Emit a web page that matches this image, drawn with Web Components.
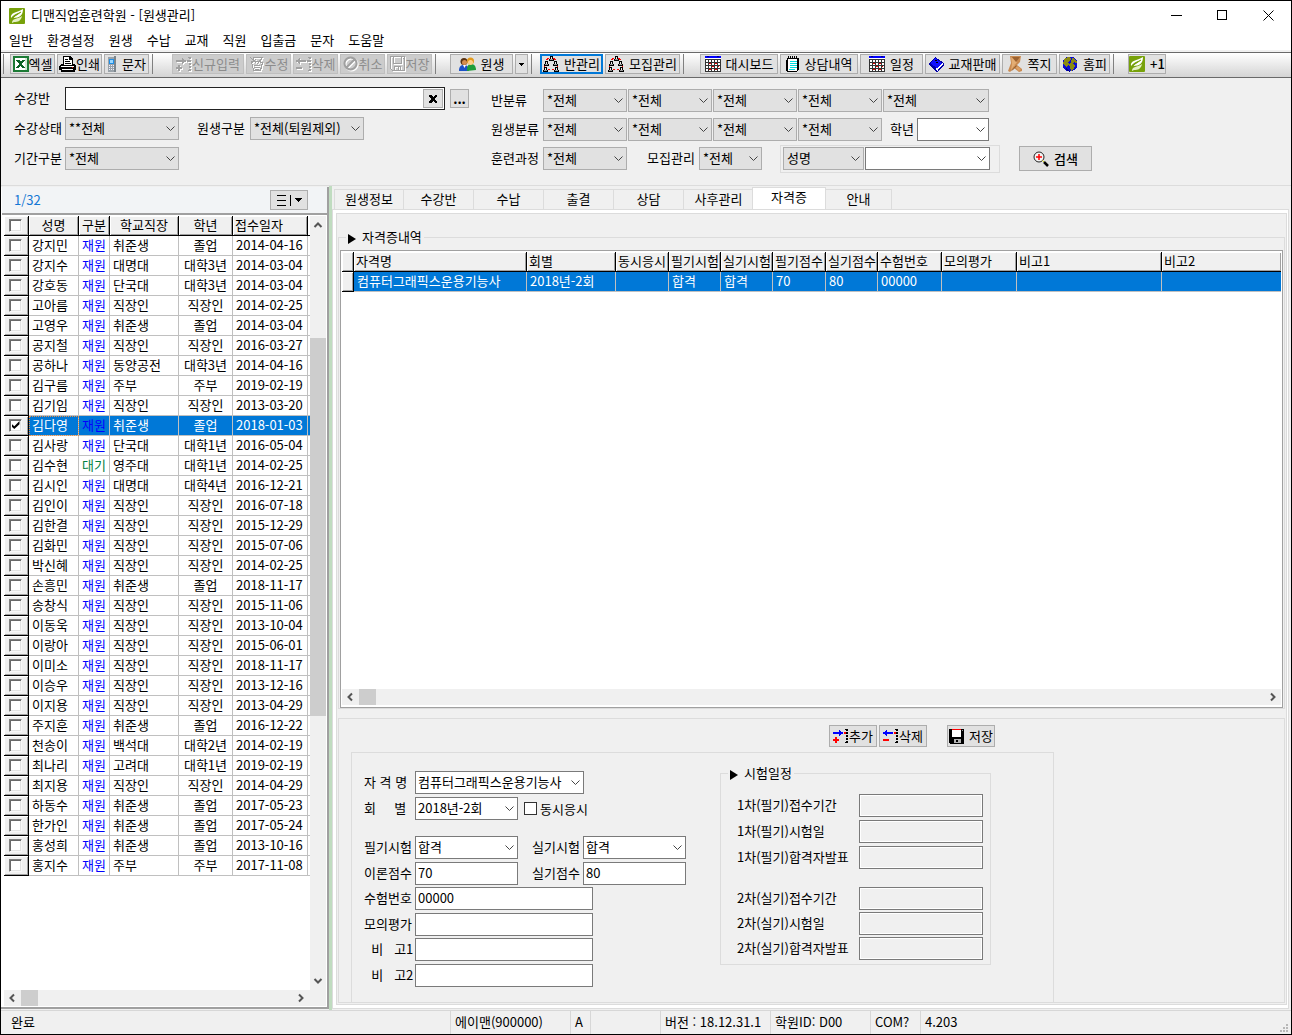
<!DOCTYPE html>
<html lang="ko">
<head>
<meta charset="utf-8">
<title>디맨직업훈련학원 - [원생관리]</title>
<style>
html, body { margin: 0; height: 100%; }
body { font: 13px/18px "Noto Sans CJK KR", "Malgun Gothic", sans-serif; color: #000; background: #f0f0f0; }
</style>
</head>
<body>
<academy-app></academy-app>
<script>
const BASE = `
  :host { display: block; box-sizing: border-box; }
  *, *::before { box-sizing: border-box; }
  button, input, select { font: inherit; color: inherit; margin: 0; border-radius: 0; outline: 0; }
  button { background: #e1e1e1; border: 1px solid #adadad; padding: 0; display: flex; align-items: center; justify-content: center; white-space: nowrap; }
  table { border-collapse: separate; border-spacing: 0; table-layout: fixed; }
  th { font-weight: normal; }
`;
function define(name, css, html) {
  customElements.define(name, class extends HTMLElement {
    connectedCallback() {
      if (this.shadowRoot) return;
      const root = this.attachShadow({ mode: 'open' });
      root.innerHTML = `<style>${BASE}${css}</style>` + (typeof html === 'function' ? html(this) : html);
    }
  });
}

/* ---------- icons ---------- */
const moveArrow = (dir, a, b, k) => {
  const arrow = dir === 'in'
    ? '<path d="M0 3h6v-2h1v1h1v1h2v2h-2v1h-1v1h-1v-2h-6z"/>'
    : '<path d="M10 3h-6v-2h-1v1h-1v1h-2v2h2v1h1v1h1v-2h6z"/>';
  const sign = dir === 'in' ? '<path d="M2 8h2v2h2v2h-2v2h-2v-2h-2v-2h2z"/>' : '<path d="M0 10h6v2h-6z"/>';
  return `<g fill="${a}">${arrow}</g><g fill="${b}">${sign}<path d="M11 3h2v2h-2z"/></g>` +
    `<path fill="${k}" d="M12 0h3v1h-3zM13 1h2v1h-2zM13 3h2v2h-2zM13 6h2v2h-2zM13 9h2v2h-2zM13 12h2v1h-2zM12 13h3v1h-3z"/>`;
};
const embossed = (shape) => `<g transform="translate(1 1)" fill="#fff" stroke="#fff">${shape}</g><g fill="#a0a0a0" stroke="#a0a0a0">${shape}</g>`;
const embossMove = (dir) => `<g transform="translate(1 1)">${moveArrow(dir, '#fff', '#fff', '#fff')}</g>${moveArrow(dir, '#a0a0a0', '#a0a0a0', '#a0a0a0')}`;
const person = (x, y) => `<g transform="translate(${x} ${y})"><path fill="#000" d="M1 0h3v3h1v2h-5v-2h1z"/><path fill="#e8e8e8" d="M2 1h1v2h-1z"/><path fill="#9a9a9a" d="M1 3h3v1h-3z"/></g>`;
const calendar = '<path fill="#fff" d="M0 2h16v14h-16z"/><path fill="#00f" d="M0 0h16v2h-16z"/><path fill="#000080" d="M2 0h2v1h-2zM12 0h2v1h-2z"/><path fill="#333" d="M0 3h1v13h-1zM3 3h1v13h-1zM6 3h1v13h-1zM9 3h1v13h-1zM12 3h1v13h-1zM15 3h1v13h-1zM0 3h16v1h-16zM0 6h16v1h-16zM0 9h16v1h-16zM0 12h16v1h-16zM0 15h16v1h-16z"/><path fill="#e00" d="M4 7h2v1h-2zM10 7h2v1h-2zM7 10h2v1h-2zM13 10h1v1h-1zM4 13h2v1h-2zM10 13h2v1h-2z"/>';
const ICONS = {
  leaf: [16, 16, '<rect width="16" height="16" rx="1" fill="#77a10a"/><path fill="#fff" d="M2 10C1 4 8 5 14 1c0 6-3 9-10 9 4-3 6-4 8-6-4 1-8 3-10 6z"/><path fill="#e4efc4" d="M3 14c1-4 6-3 10-6-1 5-4 6-8 6l-2 1z"/><path stroke="#77a10a" fill="none" d="M3 11c3-4 6-5 9-7"/>', 1],
  excel: [16, 16, '<path fill="#1c7a35" d="M0 0h16v16h-16z"/><path fill="#fff" d="M2 2h12v12h-12z"/><path fill="#cfe5d3" d="M12 2h2v12h-2z"/><path fill="#0b6125" d="M3 4h3l2 2 1-2h3l-3 4 3 4h-3l-2-2-1 2h-3l3-4z"/>'],
  printer: [17, 16, '<path fill="#000" d="M4 0h7l3 3v5h2l1 2v4h-1v2h-14v-2h-2v-4l2-2h2z"/><path fill="#fff" d="M5 1h5v3h3v5h-8zM2 10h13v1h-13zM3 13h11v1h-11z"/><path fill="#000" d="M6 3h3v1h-3zM6 5h5v1h-5zM6 7h6v1h-6z"/><path fill="#d00" d="M13 11h1v1h-1z"/>'],
  phone: [10, 16, '<g transform="translate(-3 0)"><path fill="#9aa3aa" d="M4 1h8v15h-8z"/><path fill="#7b858c" d="M10 0h2v16h-2z"/><path fill="#1f8fe8" d="M5 3h5v5h-5z"/><path fill="#9bd8ff" d="M6 4h3v3h-3z"/><path fill="#eef" d="M5 9h1v1h-1zM7 9h1v1h-1zM9 9h1v1h-1zM5 11h1v1h-1zM7 11h1v1h-1zM9 11h1v1h-1zM5 13h1v1h-1zM7 13h1v1h-1zM9 13h1v1h-1z"/></g>'],
  addOff: [16, 15, embossMove('in')],
  delOff: [16, 15, embossMove('out')],
  editOff: [16, 16, embossed('<path fill="none" d="M4.5 3.5v-2h9l-2 3M2.5 5.5h7l4 1-2 8h-7zM1 1l6 6M7 3l-5 5M5 9h6M5 11h6M6 13h4M8 8l5-6"/>')],
  cancelOff: [16, 16, embossed('<path fill="none" stroke-width="2" d="M7.500 1.500a6 6 0 1 0 .1 0zM3.500 11.500l8-8"/>'), 1],
  saveOff: [16, 16, embossed('<path fill="none" d="M.5.5h14v14h-12l-2-2zM3.500.5v7h8v-7M4.500 14v-4h6v4M8.500 11v3M13.500 2v1"/>')],
  people: [17, 14, '<path fill="#1b50c8" d="M0 14c0-5 2-6 5-6s5 2 5 6z"/><path fill="#1f9d3a" d="M8 14c0-5 1-7 4-7s5 2 5 6z"/><circle cx="5" cy="4.500" r="3.500" fill="#5a3312"/><circle cx="5.500" cy="5.500" r="2.500" fill="#d58d4e"/><circle cx="11.500" cy="4" r="3.500" fill="#e39a1c"/><circle cx="11.500" cy="5.500" r="2.500" fill="#ffd08c"/><path fill="#fff" d="M4 8l1.500 3 1.500-3z"/>', 1],
  team: [16, 16, '<path fill="#f00" d="M4 2h2v1h-2zM3 3h2v1h-2zM10 2h2v1h-2zM11 3h2v1h-2zM1 8h1v3h-1zM14 8h1v3h-1zM5 13h2v1h-2zM9 13h2v1h-2z"/>' + person(6, 0) + person(1, 5) + person(10, 5) + person(0, 11) + person(11, 11)],
  calendar: [16, 16, calendar],
  memo: [14, 16, '<path fill="#000" d="M1 2h1v-2h1v2h1v-2h1v2h1v-2h1v2h1v-2h1v2h1v-2h1v2h2v12h-1v1h-1v1h-10v-1h-1v-11h1z"/><path fill="#fff" d="M2 3h9v12h-9z"/><path fill="#0dd" d="M4 5h7v1h-7zM4 7h7v1h-7zM4 9h7v1h-7zM4 11h7v1h-7zM3 13h6v1h-6z"/>'],
  book: [15, 15, '<path fill="#0000a8" d="M0 6l6-6 9 6v2l-7 7-8-7z"/><path fill="#1010ff" d="M1 6l5-5 7 5-5 5z"/><path fill="#fff" d="M8 11l5-5 1 1-6 6zM6 12l1-1 2 2-1 1z"/><path fill="#000" d="M6 3h2v1h-2zM7 5h2v1h-2z"/>'],
  note: [15, 16, '<path fill="#c98a50" d="M2 0h11l-1 6-3 3 5 4v2l-3 1-5-4-4 4-2-1 3-8z"/><path fill="#e3ad74" d="M3 1l6 5-6 8 1-6z"/><path fill="#dca066" d="M6 8l7 5-2 2-5-5z"/><path fill="#9b6230" d="M12 1l-4 5-4-5zM8 9l-5 6 2-1 4-4z"/>', 1],
  globe: [16, 16, '<circle cx="8" cy="8" r="7.500" fill="#0b0bd0"/><path fill="#8a8a12" d="M3 2l4-1 2 2-1 2-2 1 1 2-2 3-2-1-2-3zM10 2l3 1 2 3-1 1-2-1-1 2 2 2-2 4-2 1-1-4-1-3 2-2z"/><path fill="#000080" d="M4 12l3 2 1 2-4-2z"/>'],
  add: [16, 14, moveArrow('in', '#00f', '#f00', '#000')],
  del: [16, 14, moveArrow('out', '#00f', '#f00', '#000')],
  save: [15, 15, '<path fill="#000" d="M0 0h15v15h-13l-2-1z"/><path fill="#fff" d="M3 1h9v7h-9z"/><path fill="#f00" d="M3 0h9v1h-9z"/><path fill="#b4b4b4" d="M5 10h7v4h-7z"/><path fill="#000" d="M7 11h2v2h-2z"/><path fill="#999" d="M13 1h1v1h-1z"/>'],
  search: [16, 16, '<circle cx="6" cy="6" r="5" fill="#f4f4f4" stroke="#222"/><path stroke="#f00" d="M6 3v6M3 6h6" fill="none" stroke-width="1.500"/><path stroke="#dd0" d="M9.500 9.500l1.500 1.500"/><path stroke="#000" stroke-width="2.500" d="M11 11l4 4"/>', 1],
  caret: [5, 3, '<path d="M0 0h5l-2.500 3z"/>'],
  menu: [26, 13, '<path d="M1 1h9v1h-9zM1 6h9v1h-9zM1 11h9v1h-9zM14 1h1v11h-1zM18 4h8l-4 4z"/>'],
  close: [8, 8, '<path d="M0 0h2l2 2 2-2h2v1l-2 3 2 3v1h-2l-2-2-2 2h-2v-1l2-3-2-3z"/>'],
  winMin: [11, 11, '<path d="M0 5h11v1h-11z"/>'],
  winMax: [11, 11, '<path fill="none" stroke="#000" d="M.5.5h9v9h-9z"/>'],
  winClose: [11, 11, '<path fill="none" stroke="#000" d="M.5.5l10 10M10.500.5l-10 10"/>', 1],
  play: [8, 10, '<path d="M0 0v10l8-5z"/>', 1],
  grip: [9, 9, '<path fill="#b8b8b8" d="M6 0h2v2h-2zM3 3h2v2h-2zM6 3h2v2h-2zM0 6h2v2h-2zM3 6h2v2h-2zM6 6h2v2h-2z"/>']
};
define('ui-icon', ':host { display: block; flex: none; } svg { display: block; }', (el) => {
  const [w, h, art, smooth] = ICONS[el.getAttribute('name')];
  return `<svg width="${w}" height="${h}" viewBox="0 0 ${w} ${h}" aria-hidden="true" shape-rendering="${smooth ? 'auto' : 'crispEdges'}">${art}</svg>`;
});

/* ---------- tool button: icon attribute plus slotted caption ---------- */
define('tool-button', `
  :host { flex: none; width: var(--w, 45px); }
  button { width: 100%; height: 20px; gap: var(--gap, 0px); }
  :host([tall]) button { height: 22px; }
  :host([large]) button { height: 25px; }
  :host([loose]) { --gap: 5px; }
  :host([active]) button { border: 2px solid #0078d7; }
  :host([off]) button { background: #cccccc; border-color: #bfbfbf; color: #8c8c8c; }
`, (el) => `<button type="button"${el.hasAttribute('off') ? ' disabled' : ''}${el.title ? ` aria-label="${el.title}"` : ''}>${el.hasAttribute('icon') ? `<ui-icon name="${el.getAttribute('icon')}"></ui-icon>` : ''}<slot></slot></button>`);

/* ---------- labelled text box or drop-down ---------- */
define('form-field', `
  :host { display: flex; align-items: center; height: 23px; flex: none; }
  label { width: var(--lw, 51px); flex: none; white-space: pre; padding-bottom: 2px; }
  .box { display: grid; width: var(--w, 84px); flex: none; }
  .box > * { grid-area: 1 / 1; }
  input, select { width: 100%; height: 23px; border: 1px solid #7a7a7a; background: #fff; padding: 0 2px 2px; appearance: none; line-height: 18px; }
  :host([flat]) select { background: #e1e1e1; border-color: #adadad; padding-left: 3px; }
  input[readonly] { background: #f0f0f0; box-shadow: inset 0 0 0 1px #fff; }
  svg { justify-self: end; align-self: center; margin-right: 4px; pointer-events: none; }
`, (el) => {
  const label = el.getAttribute('label'), value = el.getAttribute('value') || '';
  const name = label ? '' : ` aria-label="${el.getAttribute('hint')}"`;
  const control = el.hasAttribute('text')
    ? `<input id="c" type="text" value="${value}"${name}${el.hasAttribute('locked') ? ' readonly' : ''}>`
    : `<select id="c"${name}><option>${value}</option></select><svg width="9" height="6" viewBox="0 0 9 6" aria-hidden="true"><path d="M.5.5l4 4 4-4" fill="none" stroke="#444"/></svg>`;
  return (label ? `<label for="c">${label}</label>` : '') + `<div class="box">${control}</div>`;
});

/* ---------- scroll bar ---------- */
define('scroll-bar', `
  :host { display: flex; background: #f0f0f0; height: 16px; align-items: stretch; }
  :host([vertical]) { flex-direction: column; height: auto; width: 16px; }
  svg { flex: none; width: 17px; height: 16px; }
  :host([vertical]) svg { width: 16px; height: 17px; }
  .thumb { background: #cdcdcd; flex: 0 0 17px; }
  .after { flex: 1; }
  :host([vertical]) .before { flex: 105; }
  :host([vertical]) .thumb { flex: 377; }
  :host([vertical]) .after { flex: 257; }
`, (el) => {
  const v = el.hasAttribute('vertical');
  const arrow = (d) => `<svg viewBox="${v ? '0 0 16 17' : '0 0 17 16'}" aria-hidden="true"><path d="${d}" fill="none" stroke="#555" stroke-width="2"/></svg>`;
  return arrow(v ? 'M4.500 11l3.500-3.500 3.500 3.500' : 'M10 4.500l-3.500 3.500 3.500 3.500') +
    '<div class="before"></div><div class="thumb"></div><div class="after"></div>' +
    arrow(v ? 'M4.500 6l3.500 3.500 3.500-3.500' : 'M7 4.500l3.500 3.500-3.500 3.500');
});

/* ---------- group box ---------- */
define('group-box', `
  :host { display: flex; flex-direction: column; }
  fieldset { margin: 0; min-width: 0; flex: 1; border: 1px solid #dcdcdc; padding: var(--pad, 3px 1px 0); display: flex; flex-direction: column; }
  legend { display: flex; align-items: center; gap: 6px; height: 20px; margin-left: var(--legend, 6px); padding: 0 2px; }
  ui-icon { padding-top: 3px; }
`, (el) => `<fieldset><legend><ui-icon name="play"></ui-icon>${el.getAttribute('caption')}</legend><slot></slot></fieldset>`);

/* ---------- title, menu, toolbar ---------- */
define('title-bar', `
  :host { display: flex; align-items: center; height: 29px; background: #fff; padding-left: 8px; }
  span { flex: 1; margin-left: 6px; padding-bottom: 2px; }
  button { width: 46px; height: 29px; background: none; border: 0; }
`, `<ui-icon name="leaf"></ui-icon><span>디맨직업훈련학원 - [원생관리]</span>
  <button type="button" aria-label="최소화"><ui-icon name="winMin"></ui-icon></button>
  <button type="button" aria-label="최대화"><ui-icon name="winMax"></ui-icon></button>
  <button type="button" aria-label="닫기"><ui-icon name="winClose"></ui-icon></button>`);

define('menu-bar', `
  nav { display: flex; gap: 14px; height: 20px; padding-left: 8px; background: #fff; }
  a { color: inherit; text-decoration: none; line-height: 20px; }
`, `<nav>${['일반', '환경설정', '원생', '수납', '교재', '직원', '입출금', '문자', '도움말'].map(t => `<a href="#">${t}</a>`).join('')}</nav>`);

define('tool-bar', `
  :host { display: flex; gap: 2px; height: 26px; margin-top: 2px; padding-left: 2px; border-top: 1px solid #696969; border-bottom: 1px solid #696969; background: linear-gradient(#fff, #d4d4d4); align-items: flex-start; padding-top: 1px; overflow: hidden; }
  i { flex: none; width: 1px; height: 20px; background: #808080; margin: 0 12px 0 1px; }
  i.first { margin: 0 4px 0 0; }
  i.end { margin-right: 17px; }
  i.near { margin-right: 6px; }
  i.wide { margin-right: 14px; }
`, `<i class="first"></i>
  <tool-button icon="excel">엑셀</tool-button><tool-button icon="printer">인쇄</tool-button><tool-button loose icon="phone">문자</tool-button>
  <i class="end"></i>
  <tool-button off icon="addOff" style="--w:72px">신규입력</tool-button><tool-button off icon="editOff">수정</tool-button><tool-button off icon="delOff">삭제</tool-button><tool-button off icon="cancelOff">취소</tool-button><tool-button off icon="saveOff">저장</tool-button>
  <i></i>
  <tool-button loose icon="people" style="--w:63px">원생</tool-button><tool-button icon="caret" title="원생 메뉴" style="--w:13px"></tool-button>
  <i class="near"></i>
  <tool-button active loose icon="team" style="--w:63px">반관리</tool-button><tool-button loose icon="team" style="--w:75px">모집관리</tool-button>
  <i class="wide"></i>
  <tool-button loose icon="calendar" style="--w:78px">대시보드</tool-button><tool-button loose icon="memo" style="--w:78px">상담내역</tool-button><tool-button loose icon="calendar" style="--w:63px">일정</tool-button><tool-button loose icon="book" style="--w:75px">교재판매</tool-button><tool-button loose icon="note" style="--w:55px">쪽지</tool-button><tool-button loose icon="globe" style="--w:51px">홈피</tool-button>
  <i></i>
  <tool-button loose icon="leaf" style="--w:38px;font-weight:500">+1</tool-button>`);

/* ---------- search conditions ---------- */
const all = (hint, style = '') => `<form-field flat hint="${hint}" value="*전체" style="${style}"></form-field>`;
define('filter-panel', `
  :host { display: flex; height: 108px; border-bottom: 1px solid #dcdcdc; }
  .left { width: 490px; flex: none; padding: 9px 0 0 13px; display: flex; flex-direction: column; gap: 7px; }
  .right { padding-top: 11px; display: flex; flex-direction: column; gap: 6px; }
  .row { display: flex; align-items: center; height: 23px; }
  .right .row { gap: 1px; }
  .left label { width: 51px; flex: none; padding-bottom: 2px; }
  .entry { display: flex; width: 380px; height: 23px; border: 1px solid #222; background: #fff; padding: 1px; }
  .entry input { flex: 1; min-width: 0; border: 0; background: none; padding: 0 2px; }
  .entry button { width: 20px; }
  .more { width: 19px; height: 19px; margin-left: 5px; font-weight: bold; }
  .name { display: flex; gap: 1px; border: 1px solid #dcdcdc; height: 28px; align-items: center; padding: 0 9px 0 2px; margin-left: 17px; }
`, `
  <div class="left">
    <div class="row"><label for="cls">수강반</label><div class="entry"><input id="cls" type="text"><button type="button" aria-label="지우기"><ui-icon name="close"></ui-icon></button></div><button type="button" class="more">...</button></div>
    <div class="row"><form-field flat label="수강상태" value="**전체" style="--w:114px"></form-field><form-field flat label="원생구분" value="*전체(퇴원제외)" style="--w:114px;--lw:53px;margin-left:18px"></form-field></div>
    <div class="row"><form-field flat label="기간구분" value="*전체" style="--w:114px"></form-field></div>
  </div>
  <div class="right">
    <div class="row"><form-field flat label="반분류" value="*전체" style="--lw:52px"></form-field>${all('반분류 2')}${all('반분류 3')}${all('반분류 4')}${all('반분류 5', '--w:106px')}</div>
    <div class="row"><form-field flat label="원생분류" value="*전체" style="--lw:52px"></form-field>${all('원생분류 2')}${all('원생분류 3')}${all('원생분류 4')}<form-field label="학년" style="--lw:27px;--w:72px;margin-left:7px"></form-field></div>
    <div class="row"><form-field flat label="훈련과정" value="*전체" style="--lw:52px"></form-field><form-field flat label="모집관리" value="*전체" style="--lw:52px;--w:63px;margin-left:19px"></form-field>
      <div class="name"><form-field flat hint="검색 항목" value="성명" style="--w:81px"></form-field><form-field hint="검색어" style="--w:125px"></form-field></div>
      <tool-button large loose icon="search" style="--w:73px;font-weight:500;margin-left:18px">검색</tool-button></div>
  </div>`);

/* ---------- student list ---------- */
const STUDENTS = `강지민,취준생,졸업,2014-04-16
강지수,대명대,대학3년,2014-03-04
강호동,단국대,대학3년,2014-03-04
고아름,직장인,직장인,2014-02-25
고영우,취준생,졸업,2014-03-04
공지철,직장인,직장인,2016-03-27
공하나,동양공전,대학3년,2014-04-16
김구름,주부,주부,2019-02-19
김기임,직장인,직장인,2013-03-20
김다영,취준생,졸업,2018-01-03
김사랑,단국대,대학1년,2016-05-04
김수현,영주대,대학1년,2014-02-25
김시인,대명대,대학4년,2016-12-21
김인이,직장인,직장인,2016-07-18
김한결,직장인,직장인,2015-12-29
김화민,직장인,직장인,2015-07-06
박신혜,직장인,직장인,2014-02-25
손흥민,취준생,졸업,2018-11-17
송창식,직장인,직장인,2015-11-06
이동욱,직장인,직장인,2013-10-04
이랑아,직장인,직장인,2015-06-01
이미소,직장인,직장인,2018-11-17
이승우,직장인,직장인,2013-12-16
이지용,직장인,직장인,2013-04-29
주지훈,취준생,졸업,2016-12-22
천송이,백석대,대학2년,2014-02-19
최나리,고려대,대학1년,2019-02-19
최지용,직장인,직장인,2014-04-29
하동수,취준생,졸업,2017-05-23
한가인,취준생,졸업,2017-05-24
홍성희,취준생,졸업,2013-10-16
홍지수,주부,주부,2017-11-08`.split('\n').map(r => r.split(','));
const GRID_CSS = `
  th, td { height: 20px; padding: 0 0 2px 3px; line-height: 17px; text-align: left; white-space: nowrap; overflow: hidden; }
  thead th { background: #f0f0f0; border-right: 1px solid #000; border-bottom: 1px solid #000; padding-left: 2px; box-shadow: inset 1px 1px #fff, inset -1px -1px #a0a0a0; }
  td { border-right: 1px solid #c0c0c0; border-bottom: 1px solid #c0c0c0; }
  td.mark { background: #f0f0f0; border-color: #000; box-shadow: inset 1px 1px #fff, inset -1px -1px #a0a0a0; color: #000; }
  tr.on td:not(.mark) { background: #0078d7; color: #fff; }
`;
define('student-list', GRID_CSS + `
  :host { display: flex; flex-direction: column; width: 328px; flex: none; padding-left: 1px; border-right: 2px solid #a0a0a0; border-bottom: 2px solid #a0a0a0; background: #fff; margin-top: 1px; margin-bottom: 1px; }
  header { display: flex; align-items: center; justify-content: space-between; height: 28px; padding: 0 19px 0 12px; background: #f2f4f6; border-bottom: 2px solid #a0a0a0; color: #1477d4; }
  header button { width: 38px; height: 20px; color: #000; }
  .body { flex: 1; display: flex; min-height: 0; padding: 1px 1px 0 2px; }
  .rows { flex: 1; min-width: 0; }
  table { width: 306px; }
  .c { text-align: center; padding: 0 0 2px; }
  td.wait, td.in { text-align: center; padding: 0 0 2px; }
  td.in, tr.on td.in:not(.mark) { color: #00f; }
  td.wait { color: #008040; }
  .end { border-right: 0; padding: 0; box-shadow: none; }
  thead .end { background: #fff; }
  .mark, thead th.mark { padding: 0 0 1px 5px; }
  tr.on td.name { outline: 1px dotted #e8904a; outline-offset: -1px; }
  input { appearance: none; display: block; width: 13px; height: 13px; background: #fff; border: 1px solid; border-color: #808080 #f8f8f8 #f8f8f8 #808080; box-shadow: inset 1px 1px #696969, inset -1px -1px #e3e3e3; }
  input:checked { display: grid; place-items: center; }
  input:checked::before { content: ""; width: 8px; height: 8px; background: #000; clip-path: polygon(0 35%, 35% 65%, 100% 0, 100% 40%, 35% 100%, 0 70%); }
  .across { padding-right: 17px; margin: 0 1px 1px 2px; }
`, `<header><span>1/32</span><button type="button" aria-label="목록 메뉴"><ui-icon name="menu"></ui-icon></button></header>
  <div class="body"><div class="rows"><table>
  <colgroup><col style="width:25px"><col style="width:50px"><col style="width:31px"><col style="width:69px"><col style="width:54px"><col style="width:75px"><col style="width:2px"></colgroup>
  <thead><tr><th class="mark"><input type="checkbox" aria-label="전체 선택"></th><th class="c">성명</th><th class="c">구분</th><th class="c">학교직장</th><th class="c">학년</th><th>접수일자</th><th class="end"></th></tr></thead>
  <tbody>${STUDENTS.map(([n, s, g, d], i) => `<tr class="${i === 9 ? 'on' : ''}"><td class="mark"><input type="checkbox" aria-label="${n}"${i === 9 ? ' checked' : ''}></td><td class="name">${n}</td><td class="${i === 11 ? 'wait' : 'in'}">${i === 11 ? '대기' : '재원'}</td><td>${s}</td><td class="c">${g}</td><td>${d}</td><td class="end"></td></tr>`).join('')}</tbody>
  </table></div><scroll-bar vertical></scroll-bar></div><scroll-bar class="across"></scroll-bar>`);

/* ---------- detail tabs ---------- */
define('tab-strip', `
  :host { display: flex; align-items: flex-end; height: 24px; padding-left: 2px; margin-bottom: -1px; }
  button { width: 70px; height: 21px; background: #f0f0f0; border: 1px solid #dcdcdc; border-left-width: 0; padding-bottom: 1px; }
  button:first-of-type { border-left-width: 1px; }
  button.on { width: 74px; height: 24px; background: #fff; border-left-width: 1px; border-bottom: 0; margin: 0 0 -1px -2px; padding-bottom: 5px; }
  button.last { width: 66px; }
`, ['원생정보', '수강반', '수납', '출결', '상담', '사후관리', '자격증', '안내'].map((t, i) => `<button type="button" class="${i === 6 ? 'on' : i === 7 ? 'last' : ''}">${t}</button>`).join(''));

define('cert-grid', GRID_CSS + `
  :host { flex: 1; display: flex; flex-direction: column; background: #fff; border: 1px solid #a0a0a0; padding: 1px; }
  .rows { flex: 1; }
  table { width: 100%; }
  th:last-child, td:last-child { border-right: 0; }
  scroll-bar { margin-bottom: 1px; }
`, `<div class="rows"><table>
  <colgroup>${[12, 173, 89, 53, 52, 52, 53, 52, 64, 75, 145].map(w => `<col style="width:${w}px">`).join('')}<col></colgroup>
  <thead><tr><th></th>${['자격명', '회별', '동시응시', '필기시험', '실기시험', '필기점수', '실기점수', '수험번호', '모의평가', '비고1', '비고2'].map(t => `<th>${t}</th>`).join('')}</tr></thead>
  <tbody><tr class="on"><td class="mark"></td>${['컴퓨터그래픽스운용기능사', '2018년-2회', '', '합격', '합격', '70', '80', '00000', '', '', ''].map(t => `<td>${t}</td>`).join('')}</tr></tbody>
  </table></div><scroll-bar></scroll-bar>`);

define('exam-schedule', `
  :host { width: 271px; flex: none; --lw: 122px; --w: 124px; }
  group-box { --pad: 11px 7px 4px 16px; --legend: -9px; }
  .set { display: flex; flex-direction: column; gap: 3px; }
  .set + .set { margin-top: 18px; gap: 2px; }
`, `<group-box caption="시험일정">${['1차(필기)', '2차(실기)'].map(p => `<div class="set">${['접수기간', '시험일', '합격자발표'].map(t => `<form-field text locked label="${p}${t}"></form-field>`).join('')}</div>`).join('')}</group-box>`);

define('cert-form', `
  :host { border: 1px solid #dcdcdc; padding: 6px 12px 0; }
  .tools { display: flex; gap: 2px; padding-left: 478px; margin-bottom: 5px; }
  .card { display: flex; gap: 34px; align-items: flex-start; max-width: 703px; border: 1px solid #dcdcdc; border-bottom: 0; padding: 10px 12px 16px; }
  .fields { padding-top: 8px; width: 322px; display: flex; flex-direction: column; gap: 16px; --w: 103px; }
  .top { display: flex; flex-direction: column; gap: 3px; }
  .rest { display: grid; grid-auto-rows: 26px 25px; align-items: start; margin-bottom: -3px; }
  .pair { display: flex; gap: 14px; }
  .check { display: flex; align-items: center; gap: 3px; margin-left: -8px; }
  .check input { appearance: none; width: 13px; height: 13px; border: 1px solid #333; background: #fff; margin: 0; }
  .long { --w: 178px; }
`, `<div class="tools"><tool-button tall icon="add" style="--w:48px">추가</tool-button><tool-button tall icon="del" style="--w:48px">삭제</tool-button><tool-button tall loose icon="save" style="--w:48px;margin-left:18px">저장</tool-button></div>
  <div class="card">
    <div class="fields">
      <div class="top"><form-field label="자 격 명" value="컴퓨터그래픽스운용기능사" style="--w:169px"></form-field>
      <div class="pair"><form-field label="회     별" value="2018년-2회"></form-field><label class="check"><input type="checkbox">동시응시</label></div></div>
      <div class="rest">
        <div class="pair"><form-field label="필기시험" value="합격"></form-field><form-field label="실기시험" value="합격"></form-field></div>
        <div class="pair"><form-field text label="이론점수" value="70"></form-field><form-field text label="실기점수" value="80"></form-field></div>
        <form-field class="long" text label="수험번호" value="00000"></form-field>
        <form-field class="long" text label="모의평가"></form-field>
        <form-field class="long" text label="  비   고1"></form-field>
        <form-field class="long" text label="  비   고2"></form-field>
      </div>
    </div>
    <exam-schedule></exam-schedule>
  </div>`);

define('detail-pane', `
  :host { flex: 1; min-width: 0; display: flex; flex-direction: column; padding: 0 2px 1px 0; }
  .page { flex: 1; display: flex; border: 1px solid #dcdcdc; background: #fff; padding: 3px 1px 3px 3px; }
  .inner { flex: 1; min-width: 0; display: flex; flex-direction: column; border: 1px solid #dcdcdc; background: #f0f0f0; padding: 13px 1px 1px; gap: 9px; }
  group-box { flex: 1; }
`, `<tab-strip></tab-strip><div class="page"><div class="inner"><group-box caption="자격증내역"><cert-grid></cert-grid></group-box><cert-form></cert-form></div></div>`);

define('status-bar', `
  :host { display: flex; align-items: center; height: 24px; border-top: 1px solid #d7d7d7; white-space: nowrap; }
  span { flex: none; padding-left: 4px; border-left: 1px solid #d7d7d7; height: 23px; line-height: 22px; }
  span:first-of-type { border: 0; padding-left: 10px; }
  span:last-of-type { flex: 1; }
  ui-icon { align-self: flex-end; margin: 0 2px 1px; }
`, [['완료', 449], ['에이맨(900000)', 120], ['A', 20], ['', 70], ['버전 : 18.12.31.1', 110], ['학원ID: D00', 100], ['COM?', 50], ['4.203', 0]].map(([t, w]) => `<span${w ? ` style="width:${w}px"` : ''}>${t}</span>`).join('') + '<ui-icon name="grip"></ui-icon>');

define('academy-app', `
  :host { display: flex; flex-direction: column; min-height: 100vh; border: 1px solid #000; background: #f0f0f0; }
  main { flex: 1; display: flex; }
  .split { width: 3px; background: #c0dcc0; }
`, `<title-bar></title-bar><menu-bar></menu-bar><tool-bar></tool-bar><filter-panel></filter-panel>
  <main><student-list></student-list><div class="split"></div><detail-pane></detail-pane></main><status-bar></status-bar>`);
</script>
</body>
</html>
